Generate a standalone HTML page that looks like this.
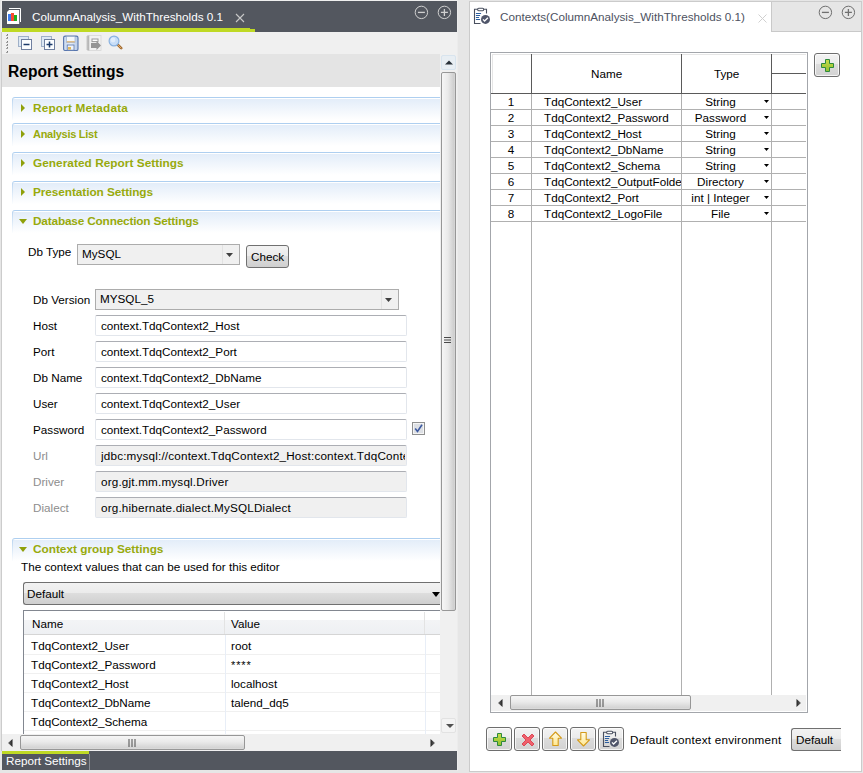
<!DOCTYPE html><html><head><meta charset="utf-8"><style>
*{margin:0;padding:0;box-sizing:border-box}
html,body{width:863px;height:773px;overflow:hidden;background:#e6e6e6;font-family:"Liberation Sans",sans-serif;font-size:11.7px;color:#000}
.a{position:absolute}
.t{position:absolute;white-space:nowrap;line-height:12px}
.sec{position:absolute;left:12px;width:428px;height:23px;border-top:1px solid #aecff0;border-left:1px solid #b8d4f0;border-top-left-radius:3px;background:linear-gradient(#ffffff 0,#ffffff 1px,#e3edf9 1px,#ffffff 100%);}
.sec:after{content:"";position:absolute;left:-1px;top:0;width:1px;height:23px;background:linear-gradient(rgba(255,255,255,0),#fff)}
.st{position:absolute;white-space:nowrap;line-height:12px;font-weight:bold;font-size:11.7px;color:#98aa0c}
.tri{position:absolute;width:0;height:0;border-top:4px solid transparent;border-bottom:4px solid transparent;border-left:4px solid #8fa00a}
.trid{position:absolute;width:0;height:0;border-left:4px solid transparent;border-right:4px solid transparent;border-top:5px solid #8fa00a}
.lbl{position:absolute;white-space:nowrap;line-height:12px}
.fld{position:absolute;left:95px;width:312px;height:21px;border:1px solid #e2e6ec;border-top-color:#acaeb4;border-radius:2px;background:#fff}
.fld.g{background:#f0f0f0}
.ft{position:absolute;left:5px;top:4px;white-space:nowrap;line-height:12px}
</style></head><body>
<div class="a" style="left:1px;top:0;width:456px;height:1px;background:#efefef"></div>
<div class="a" style="left:1px;top:0;width:1px;height:32px;background:#efefef"></div>
<div class="a" style="left:1px;top:32px;width:1px;height:719px;background:#cccccc"></div>
<div class="a" style="left:457px;top:0;width:1px;height:771px;background:#ececec"></div>
<div class="a" style="left:2px;top:1px;width:455px;height:31px;background:#53575f"></div>
<div class="a" style="left:2px;top:28px;width:248px;height:4px;background:#bfd924"></div>
<div class="a" style="left:250px;top:29px;width:5px;height:3px;background:#bfd924"></div>
<svg class="a" style="left:6px;top:7px" width="16" height="18" viewBox="0 0 16 18">
<path d="M3 1.5H14.5V15" fill="none" stroke="#fff" stroke-width="1"/>
<path d="M3 3H13.2V17H1V5Z" fill="#fff"/>
<rect x="2" y="7" width="3" height="7" fill="#3c7cf0"/>
<rect x="5" y="6" width="3" height="8" fill="#fa4a30"/>
<rect x="8" y="8" width="3" height="6" fill="#1fb020"/>
</svg>
<div class="t" style="left:32px;top:11px;color:#fff">ColumnAnalysis_WithThresholds 0.1</div>
<svg class="a" style="left:235px;top:13px" width="10" height="10" viewBox="0 0 10 10"><path d="M1 1L9 9M9 1L1 9" stroke="#c8c8c8" stroke-width="1.1"/></svg>
<svg class="a" style="left:414px;top:5px" width="15" height="15" viewBox="0 0 15 15"><circle cx="7.4" cy="7.4" r="6.2" fill="none" stroke="#d0d0d0" stroke-width="1"/><path d="M3.9 7.4H10.9" stroke="#d0d0d0" stroke-width="1.3"/></svg><svg class="a" style="left:437px;top:5px" width="15" height="15" viewBox="0 0 15 15"><circle cx="7.4" cy="7.4" r="6.2" fill="none" stroke="#d0d0d0" stroke-width="1"/><path d="M3.9 7.4H10.9M7.4 3.9V10.9" stroke="#d0d0d0" stroke-width="1.3"/></svg>
<div class="a" style="left:2px;top:32px;width:455px;height:22px;background:#f0f0f0"></div>
<div class="a" style="left:7px;top:34.0px;width:1px;height:1px;background:#808080"></div>
<div class="a" style="left:6px;top:35.0px;width:2px;height:1px;background:#a0a0a0"></div>
<div class="a" style="left:7px;top:37.3px;width:1px;height:1px;background:#808080"></div>
<div class="a" style="left:6px;top:38.3px;width:2px;height:1px;background:#a0a0a0"></div>
<div class="a" style="left:7px;top:40.6px;width:1px;height:1px;background:#808080"></div>
<div class="a" style="left:6px;top:41.6px;width:2px;height:1px;background:#a0a0a0"></div>
<div class="a" style="left:7px;top:43.9px;width:1px;height:1px;background:#808080"></div>
<div class="a" style="left:6px;top:44.9px;width:2px;height:1px;background:#a0a0a0"></div>
<div class="a" style="left:7px;top:47.2px;width:1px;height:1px;background:#808080"></div>
<div class="a" style="left:6px;top:48.2px;width:2px;height:1px;background:#a0a0a0"></div>
<div class="a" style="left:7px;top:50.5px;width:1px;height:1px;background:#808080"></div>
<div class="a" style="left:6px;top:51.5px;width:2px;height:1px;background:#a0a0a0"></div>
<svg class="a" style="left:18px;top:36px" width="14" height="14" viewBox="0 0 14 14"><rect x="0.5" y="0.5" width="10" height="10" fill="#dde8f4" stroke="#9fb0c8"/><rect x="3.5" y="3.5" width="10" height="10" fill="#fbfdff" stroke="#6f7f9f"/><path d="M5.5 8.5H11.5" stroke="#1b3a6a" stroke-width="1.5"/></svg>
<svg class="a" style="left:41px;top:36px" width="14" height="14" viewBox="0 0 14 14"><rect x="0.5" y="0.5" width="10" height="10" fill="#dde8f4" stroke="#9fb0c8"/><rect x="3.5" y="3.5" width="10" height="10" fill="#fbfdff" stroke="#6f7f9f"/><path d="M5.5 8.5H11.5" stroke="#1b3a6a" stroke-width="1.5"/><path d="M8.5 5.5V11.5" stroke="#1b3a6a" stroke-width="1.5"/></svg>
<svg class="a" style="left:63px;top:35px" width="16" height="16" viewBox="0 0 16 16">
<defs><linearGradient id="sv" x1="0" y1="0" x2="1" y2="0"><stop offset="0" stop-color="#c8d8ee"/><stop offset="0.5" stop-color="#e4ecf8"/><stop offset="1" stop-color="#b8cae6"/></linearGradient></defs>
<rect x="0.6" y="1.1" width="14.4" height="14.4" rx="1.6" fill="url(#sv)" stroke="#5876ad" stroke-width="1.1"/>
<rect x="3.5" y="1.5" width="8.5" height="6" fill="#f4f8fc" stroke="#8fa6c6" stroke-width="0.6"/>
<rect x="3.8" y="6.2" width="8" height="1.2" fill="#d9b070"/>
<rect x="4.2" y="10" width="6.8" height="5.2" fill="#f0f4fa" stroke="#5876ad" stroke-width="0.8"/>
<rect x="5" y="12" width="3" height="2.6" fill="#e0b860"/>
</svg>
<svg class="a" style="left:86px;top:35px" width="16" height="16" viewBox="0 0 16 16">
<rect x="1.5" y="0.5" width="13.5" height="15" fill="#f2f2f2" stroke="#d6d6d6" stroke-width="0.8"/>
<path d="M0.5 2H3M0.5 4H3M0.5 6H3M0.5 8H3M0.5 10H3M0.5 12H3M0.5 14H3" stroke="#9a9a9a" stroke-width="0.9"/>
<path d="M2.8 0.5V15.5" stroke="#a8a8a8" stroke-width="0.8"/>
<rect x="6" y="4" width="6" height="2.6" fill="#fff" stroke="#9a9a9a" stroke-width="1"/>
<path d="M5 8H10.5V5.8L15 10.5L10.5 15V13H5Z" fill="#959595"/>
</svg>
<svg class="a" style="left:108px;top:35px" width="15" height="15" viewBox="0 0 15 15">
<line x1="9.4" y1="9.4" x2="13.2" y2="13.2" stroke="#a06a30" stroke-width="2.6" stroke-linecap="round"/>
<line x1="9.6" y1="9.6" x2="13" y2="13" stroke="#e0a868" stroke-width="1" stroke-linecap="round"/>
<circle cx="6" cy="6" r="4.9" fill="#c8def8" stroke="#8ab2e0" stroke-width="1.2"/>
<circle cx="5" cy="5" r="2.4" fill="#ffffff" opacity="0.45"/>
</svg>
<div class="a" style="left:2px;top:54px;width:438px;height:680px;background:#fff"></div>
<div class="a" style="left:2px;top:54px;width:438px;height:33px;background:#e4e4e4"></div>
<div class="t" style="left:8px;top:64px;font-weight:bold;font-size:15.6px;line-height:16px">Report Settings</div>
<div class="sec" style="top:97px"></div>
<div class="tri" style="left:21px;top:104px"></div>
<div class="st" style="left:33px;top:102px;font-size:11.8px;letter-spacing:0.17px">Report Metadata</div>
<div class="sec" style="top:123px"></div>
<div class="tri" style="left:21px;top:130px"></div>
<div class="st" style="left:33px;top:128px;font-size:11px;letter-spacing:-0.27px">Analysis List</div>
<div class="sec" style="top:152px"></div>
<div class="tri" style="left:21px;top:159px"></div>
<div class="st" style="left:33px;top:157px;font-size:11.8px;letter-spacing:0.05px">Generated Report Settings</div>
<div class="sec" style="top:181px"></div>
<div class="tri" style="left:21px;top:188px"></div>
<div class="st" style="left:33px;top:186px;font-size:11.8px;letter-spacing:-0.06px">Presentation Settings</div>
<div class="sec" style="top:210px"></div>
<div class="trid" style="left:19px;top:219px"></div>
<div class="st" style="left:33px;top:215px;font-size:11.8px;letter-spacing:-0.17px">Database Connection Settings</div>
<div class="sec" style="top:538px"></div>
<div class="trid" style="left:19px;top:547px"></div>
<div class="st" style="left:33px;top:543px;font-size:11.8px">Context group Settings</div>
<div class="lbl" style="left:28px;top:246px">Db Type</div>
<div class="a" style="left:77px;top:244px;width:163px;height:21px;border:1px solid #acacac;background:#f0f0f0"></div>
<div class="a" style="left:222px;top:245px;width:1px;height:19px;background:#e2e2e2"></div>
<div class="t" style="left:82px;top:248px">MySQL</div>
<svg class="a" style="left:226px;top:253px" width="8" height="4" viewBox="0 0 8 4"><path d="M0 0H7L3.5 4Z" fill="#404040"/></svg>
<div class="a" style="left:246px;top:245px;width:43px;height:23px;border:1px solid #707070;border-radius:3px;background:linear-gradient(#f2f2f2 0%,#ebebeb 50%,#dddddd 50%,#cfcfcf 100%)"></div>
<div class="t" style="left:251px;top:251px">Check</div>
<div class="lbl" style="left:33px;top:294px">Db Version</div>
<div class="a" style="left:95px;top:289px;width:304px;height:21px;border:1px solid #acacac;background:#f0f0f0"></div>
<div class="a" style="left:381px;top:290px;width:1px;height:19px;background:#e2e2e2"></div>
<div class="t" style="left:100px;top:293px">MYSQL_5</div>
<svg class="a" style="left:385px;top:298px" width="8" height="4" viewBox="0 0 8 4"><path d="M0 0H7L3.5 4Z" fill="#404040"/></svg>
<div class="lbl" style="left:33px;top:320px;color:#000">Host</div>
<div class="fld" style="top:315px;overflow:hidden"><div class="ft" style="">context.TdqContext2_Host</div></div>
<div class="lbl" style="left:33px;top:346px;color:#000">Port</div>
<div class="fld" style="top:341px;overflow:hidden"><div class="ft" style="">context.TdqContext2_Port</div></div>
<div class="lbl" style="left:33px;top:372px;color:#000">Db Name</div>
<div class="fld" style="top:367px;overflow:hidden"><div class="ft" style="">context.TdqContext2_DbName</div></div>
<div class="lbl" style="left:33px;top:398px;color:#000">User</div>
<div class="fld" style="top:393px;overflow:hidden"><div class="ft" style="">context.TdqContext2_User</div></div>
<div class="lbl" style="left:33px;top:424px;color:#000">Password</div>
<div class="fld" style="top:419px;overflow:hidden"><div class="ft" style="">context.TdqContext2_Password</div></div>
<div class="lbl" style="left:33px;top:450px;color:#8d8d8d">Url</div>
<div class="fld g" style="top:445px;overflow:hidden"><div class="ft" style="letter-spacing:0.18px;width:304px;overflow:hidden">jdbc:mysql://context.TdqContext2_Host:context.TdqContext2_Port</div></div>
<div class="lbl" style="left:33px;top:476px;color:#8d8d8d">Driver</div>
<div class="fld g" style="top:471px;overflow:hidden"><div class="ft" style="letter-spacing:0.18px;width:304px;overflow:hidden">org.gjt.mm.mysql.Driver</div></div>
<div class="lbl" style="left:33px;top:502px;color:#8d8d8d">Dialect</div>
<div class="fld g" style="top:497px;overflow:hidden"><div class="ft" style="letter-spacing:0.18px;width:304px;overflow:hidden">org.hibernate.dialect.MySQLDialect</div></div>
<svg class="a" style="left:412px;top:422px" width="13" height="13" viewBox="0 0 13 13">
<rect x="0.5" y="0.5" width="12" height="12" fill="#f4f4f4" stroke="#8e8f8f"/>
<rect x="2" y="2" width="9" height="9" fill="#dcdfe4"/>
<path d="M3.2 6.5L5.5 9.5L10 2.8" fill="none" stroke="#3d5aa0" stroke-width="1.6"/>
</svg>
<div class="t" style="left:21px;top:561px">The context values that can be used for this editor</div>
<div class="a" style="left:23px;top:582px;width:418px;height:23px;border:1px solid #707070;border-right:none;border-radius:3px 0 0 3px;background:linear-gradient(#f2f2f2 0%,#ebebeb 50%,#dddddd 50%,#cfcfcf 100%)"></div>
<div class="t" style="left:27px;top:588px">Default</div>
<svg class="a" style="left:432px;top:592px" width="8" height="5" viewBox="0 0 8 5"><path d="M0 0H8L4 5Z" fill="#000"/></svg>
<div class="a" style="left:23px;top:610px;width:418px;height:124px;border-top:1px solid #828790;border-left:1px solid #828790;background:#fff;overflow:hidden">
<div class="a" style="left:0;top:9px;width:417px;height:14px;background:linear-gradient(#f3f4f6,#eef0f3)"></div>
<div class="a" style="left:0;top:23px;width:417px;height:1px;background:#d5d5d5"></div>
<div class="a" style="left:200px;top:1px;width:1px;height:22px;background:#e3e3e3"></div>
<div class="a" style="left:400px;top:1px;width:1px;height:22px;background:#e3e3e3"></div>
<div class="t" style="left:8px;top:7px">Name</div>
<div class="t" style="left:207px;top:7px">Value</div>
<div class="a" style="left:0;top:43px;width:417px;height:1px;background:#f0f0f0"></div>
<div class="t" style="left:7px;top:29px">TdqContext2_User</div>
<div class="t" style="left:207px;top:29px">root</div>
<div class="a" style="left:0;top:62px;width:417px;height:1px;background:#f0f0f0"></div>
<div class="t" style="left:7px;top:48px">TdqContext2_Password</div>
<div class="t" style="left:207px;top:48px;font-size:11px;letter-spacing:0.9px">****</div>
<div class="a" style="left:0;top:81px;width:417px;height:1px;background:#f0f0f0"></div>
<div class="t" style="left:7px;top:67px">TdqContext2_Host</div>
<div class="t" style="left:207px;top:67px">localhost</div>
<div class="a" style="left:0;top:100px;width:417px;height:1px;background:#f0f0f0"></div>
<div class="t" style="left:7px;top:86px">TdqContext2_DbName</div>
<div class="t" style="left:207px;top:86px">talend_dq5</div>
<div class="a" style="left:0;top:119px;width:417px;height:1px;background:#f0f0f0"></div>
<div class="t" style="left:7px;top:105px">TdqContext2_Schema</div>
<div class="t" style="left:207px;top:105px"></div>
<div class="a" style="left:201px;top:24px;width:1px;height:100px;background:#e8eef7"></div>
<div class="a" style="left:401px;top:24px;width:1px;height:100px;background:#e8eef7"></div>
</div>
<div class="a" style="left:440px;top:54px;width:17px;height:680px;background:#f0f0f0"></div>
<div class="a" style="left:441px;top:55px;width:15px;height:15px;border:1px solid #d8e4ee;border-radius:2px;background:#e8eef3"></div>
<svg class="a" style="left:445px;top:60px" width="8" height="5" viewBox="0 0 8 5"><path d="M0 4.5L4 0.5L8 4.5Z" fill="#283038"/></svg>
<div class="a" style="left:441px;top:72px;width:15px;height:539px;border:1px solid #979797;border-radius:2px;background:linear-gradient(90deg,#f6f6f6,#eaeaea 45%,#cfcfcf 90%,#d8d8d8)"></div>
<svg class="a" style="left:444px;top:337px" width="8" height="7" viewBox="0 0 8 7"><path d="M0 0.5H7M0 3H7M0 5.5H7" stroke="#4a4a4a" stroke-width="1"/></svg>
<div class="a" style="left:441px;top:718px;width:15px;height:15px;border:1px solid #e2e2e2;border-radius:2px;background:#f3f3f3"></div>
<svg class="a" style="left:446px;top:724px" width="8" height="4" viewBox="0 0 8 4"><path d="M0 0H8L4 4Z" fill="#505050"/></svg>
<div class="a" style="left:2px;top:734px;width:455px;height:17px;background:#f0f0f0"></div>
<svg class="a" style="left:8px;top:739px" width="5" height="8" viewBox="0 0 5 8"><defs><linearGradient id="ha" x1="0" y1="0" x2="1" y2="0"><stop offset="0" stop-color="#707070"/><stop offset="1" stop-color="#202020"/></linearGradient><linearGradient id="hb" x1="0" y1="0" x2="1" y2="0"><stop offset="0" stop-color="#202020"/><stop offset="1" stop-color="#707070"/></linearGradient></defs><path d="M4.5 0L0 4L4.5 8Z" fill="url(#ha)"/></svg>
<div class="a" style="left:20px;top:735px;width:225px;height:15px;border:1px solid #979797;border-radius:2px;background:linear-gradient(#f6f6f6,#eaeaea 45%,#d4d4d4 90%,#dcdcdc)"></div>
<svg class="a" style="left:128px;top:739px" width="8" height="8" viewBox="0 0 8 8"><path d="M1 0V8M4 0V8M7 0V8" stroke="#4a4a4a" stroke-width="1"/></svg>
<svg class="a" style="left:430px;top:739px" width="5" height="8" viewBox="0 0 5 8"><path d="M0.5 0L5 4L0.5 8Z" fill="url(#hb)"/></svg>
<div class="a" style="left:2px;top:751px;width:455px;height:19px;background:#53575f"></div>
<div class="a" style="left:2px;top:751px;width:87px;height:3px;background:#bfd924"></div>
<div class="a" style="left:89px;top:754px;width:1px;height:16px;background:#8a8d94"></div>
<div class="t" style="left:6px;top:755px;color:#fff">Report Settings</div>
<div class="a" style="left:469px;top:1px;width:393px;height:771px;background:#cbcbcb"></div>
<div class="a" style="left:470px;top:2px;width:391px;height:769px;background:#fff"></div>
<div class="a" style="left:771px;top:2px;width:90px;height:30px;background:#e6e6e6;border-left:1px solid #c9c9c9;border-bottom:1px solid #c9c9c9"></div>
<div class="t" style="left:500px;top:11px;color:#4d5261">Contexts(ColumnAnalysis_WithThresholds 0.1)</div>
<svg class="a" style="left:472px;top:5px" width="20" height="20" viewBox="0 0 20 20">
<path d="M8.5 18.5H2.5V4.3H14.5V8.5" fill="none" stroke="#4a5060" stroke-width="1.1"/>
<rect x="5.6" y="3.3" width="6.1" height="2.4" rx="1.1" fill="#fff" stroke="#4a5060" stroke-width="1.1"/>
<path d="M4.3 8.5H8.7M4.3 10.5H7.7M4.3 12.5H6.7M4.3 14.5H7.7" stroke="#2a5d9f" stroke-width="1" stroke-linecap="round"/>
<circle cx="13.5" cy="14.4" r="4.5" fill="#50566a"/>
<path d="M11 14.4L12.6 16L15.9 12.8" fill="none" stroke="#fff" stroke-width="1.3"/>
</svg>
<svg class="a" style="left:758px;top:14px" width="9" height="9" viewBox="0 0 9 9"><path d="M0.5 0.5L8.5 8.5M8.5 0.5L0.5 8.5" stroke="#d0d0d0" stroke-width="1"/></svg>
<svg class="a" style="left:818px;top:5px" width="15" height="15" viewBox="0 0 15 15"><circle cx="7.4" cy="7.4" r="6.2" fill="none" stroke="#707070" stroke-width="1"/><path d="M3.9 7.4H10.9" stroke="#707070" stroke-width="1.3"/></svg><svg class="a" style="left:841px;top:5px" width="15" height="15" viewBox="0 0 15 15"><circle cx="7.4" cy="7.4" r="6.2" fill="none" stroke="#707070" stroke-width="1"/><path d="M3.9 7.4H10.9M7.4 3.9V10.9" stroke="#707070" stroke-width="1.3"/></svg>
<div class="a" style="left:490px;top:52px;width:318px;height:661px;border:1px solid #a3a6ab;background:#fff"></div>
<div class="a" style="left:492px;top:54px;width:314px;height:1px;background:#e6e6e6"></div>
<div class="a" style="left:492px;top:54px;width:1px;height:40px;background:#e6e6e6"></div>
<div class="a" style="left:491px;top:93px;width:315px;height:1px;background:#5a5a5a"></div>
<div class="a" style="left:531px;top:54px;width:1px;height:40px;background:#5a5a5a"></div>
<div class="a" style="left:681px;top:54px;width:1px;height:40px;background:#5a5a5a"></div>
<div class="a" style="left:771px;top:54px;width:1px;height:40px;background:#5a5a5a"></div>
<div class="a" style="left:772px;top:73px;width:34px;height:1px;background:#5a5a5a"></div>
<div class="t" style="left:591px;top:68px">Name</div>
<div class="t" style="left:714px;top:68px">Type</div>
<div class="a" style="left:531px;top:94px;width:1px;height:601px;background:#b0b0b0"></div>
<div class="a" style="left:681px;top:94px;width:1px;height:601px;background:#b0b0b0"></div>
<div class="a" style="left:771px;top:94px;width:1px;height:601px;background:#b0b0b0"></div>
<div class="a" style="left:491px;top:109px;width:315px;height:1px;background:#b0b0b0"></div>
<div class="t" style="left:491px;top:96px;width:40px;text-align:center">1</div>
<div class="a" style="left:532px;top:94px;width:149px;height:15px;overflow:hidden"><div class="t" style="left:12px;top:2px">TdqContext2_User</div></div>
<div class="t" style="left:682px;top:96px;width:77px;text-align:center">String</div>
<svg class="a" style="left:764px;top:100px" width="5" height="3" viewBox="0 0 5 3"><path d="M0 0H5L2.5 3Z" fill="#000"/></svg>
<div class="a" style="left:491px;top:125px;width:315px;height:1px;background:#b0b0b0"></div>
<div class="t" style="left:491px;top:112px;width:40px;text-align:center">2</div>
<div class="a" style="left:532px;top:110px;width:149px;height:15px;overflow:hidden"><div class="t" style="left:12px;top:2px">TdqContext2_Password</div></div>
<div class="t" style="left:682px;top:112px;width:77px;text-align:center">Password</div>
<svg class="a" style="left:764px;top:116px" width="5" height="3" viewBox="0 0 5 3"><path d="M0 0H5L2.5 3Z" fill="#000"/></svg>
<div class="a" style="left:491px;top:141px;width:315px;height:1px;background:#b0b0b0"></div>
<div class="t" style="left:491px;top:128px;width:40px;text-align:center">3</div>
<div class="a" style="left:532px;top:126px;width:149px;height:15px;overflow:hidden"><div class="t" style="left:12px;top:2px">TdqContext2_Host</div></div>
<div class="t" style="left:682px;top:128px;width:77px;text-align:center">String</div>
<svg class="a" style="left:764px;top:132px" width="5" height="3" viewBox="0 0 5 3"><path d="M0 0H5L2.5 3Z" fill="#000"/></svg>
<div class="a" style="left:491px;top:157px;width:315px;height:1px;background:#b0b0b0"></div>
<div class="t" style="left:491px;top:144px;width:40px;text-align:center">4</div>
<div class="a" style="left:532px;top:142px;width:149px;height:15px;overflow:hidden"><div class="t" style="left:12px;top:2px">TdqContext2_DbName</div></div>
<div class="t" style="left:682px;top:144px;width:77px;text-align:center">String</div>
<svg class="a" style="left:764px;top:148px" width="5" height="3" viewBox="0 0 5 3"><path d="M0 0H5L2.5 3Z" fill="#000"/></svg>
<div class="a" style="left:491px;top:173px;width:315px;height:1px;background:#b0b0b0"></div>
<div class="t" style="left:491px;top:160px;width:40px;text-align:center">5</div>
<div class="a" style="left:532px;top:158px;width:149px;height:15px;overflow:hidden"><div class="t" style="left:12px;top:2px">TdqContext2_Schema</div></div>
<div class="t" style="left:682px;top:160px;width:77px;text-align:center">String</div>
<svg class="a" style="left:764px;top:164px" width="5" height="3" viewBox="0 0 5 3"><path d="M0 0H5L2.5 3Z" fill="#000"/></svg>
<div class="a" style="left:491px;top:189px;width:315px;height:1px;background:#b0b0b0"></div>
<div class="t" style="left:491px;top:176px;width:40px;text-align:center">6</div>
<div class="a" style="left:532px;top:174px;width:149px;height:15px;overflow:hidden"><div class="t" style="left:12px;top:2px">TdqContext2_OutputFolder</div></div>
<div class="t" style="left:682px;top:176px;width:77px;text-align:center">Directory</div>
<svg class="a" style="left:764px;top:180px" width="5" height="3" viewBox="0 0 5 3"><path d="M0 0H5L2.5 3Z" fill="#000"/></svg>
<div class="a" style="left:491px;top:205px;width:315px;height:1px;background:#b0b0b0"></div>
<div class="t" style="left:491px;top:192px;width:40px;text-align:center">7</div>
<div class="a" style="left:532px;top:190px;width:149px;height:15px;overflow:hidden"><div class="t" style="left:12px;top:2px">TdqContext2_Port</div></div>
<div class="t" style="left:682px;top:192px;width:77px;text-align:center">int | Integer</div>
<svg class="a" style="left:764px;top:196px" width="5" height="3" viewBox="0 0 5 3"><path d="M0 0H5L2.5 3Z" fill="#000"/></svg>
<div class="a" style="left:491px;top:221px;width:315px;height:1px;background:#b0b0b0"></div>
<div class="t" style="left:491px;top:208px;width:40px;text-align:center">8</div>
<div class="a" style="left:532px;top:206px;width:149px;height:15px;overflow:hidden"><div class="t" style="left:12px;top:2px">TdqContext2_LogoFile</div></div>
<div class="t" style="left:682px;top:208px;width:77px;text-align:center">File</div>
<svg class="a" style="left:764px;top:212px" width="5" height="3" viewBox="0 0 5 3"><path d="M0 0H5L2.5 3Z" fill="#000"/></svg>
<div class="a" style="left:491px;top:695px;width:315px;height:16px;background:#f0f0f0"></div>
<svg class="a" style="left:498px;top:699px" width="5" height="8" viewBox="0 0 5 8"><path d="M4.5 0L0 4L4.5 8Z" fill="url(#ha)"/></svg>
<div class="a" style="left:510px;top:695px;width:181px;height:15px;border:1px solid #979797;border-radius:2px;background:linear-gradient(#f6f6f6,#eaeaea 45%,#d4d4d4 90%,#dcdcdc)"></div>
<svg class="a" style="left:596px;top:699px" width="8" height="8" viewBox="0 0 8 8"><path d="M1 0V8M4 0V8M7 0V8" stroke="#4a4a4a" stroke-width="1"/></svg>
<svg class="a" style="left:796px;top:699px" width="5" height="8" viewBox="0 0 5 8"><path d="M0.5 0L5 4L0.5 8Z" fill="url(#hb)"/></svg>
<div class="a" style="left:814px;top:53px;width:26px;height:24px;border:1px solid #6e6e6e;border-radius:3px;background:linear-gradient(#f3f3f3 0%,#ebebeb 45%,#dcdcdc 45%,#d2d2d2 100%);box-shadow:inset 0 0 0 1px rgba(255,255,255,0.75)"><svg class="a" style="left:6px;top:5px" width="13" height="13" viewBox="0 0 13 13"><defs><linearGradient id="gp" x1="0" y1="0" x2="0" y2="1"><stop offset="0" stop-color="#c8dc48"/><stop offset="1" stop-color="#90c030"/></linearGradient><linearGradient id="ga" x1="0" y1="0" x2="0" y2="1"><stop offset="0" stop-color="#fffbe6"/><stop offset="1" stop-color="#ffe890"/></linearGradient></defs><path d="M4.5 0.5H8.5V4.5H12.5V8.5H8.5V12.5H4.5V8.5H0.5V4.5H4.5Z" fill="url(#gp)" stroke="#2c8a3c" stroke-width="1"/></svg></div>
<div class="a" style="left:486px;top:727px;width:26px;height:24px;border:1px solid #6e6e6e;border-radius:3px;background:linear-gradient(#f3f3f3 0%,#ebebeb 45%,#dcdcdc 45%,#d2d2d2 100%);box-shadow:inset 0 0 0 1px rgba(255,255,255,0.75)"><svg class="a" style="left:6px;top:5px" width="13" height="13" viewBox="0 0 13 13"><defs><linearGradient id="gp" x1="0" y1="0" x2="0" y2="1"><stop offset="0" stop-color="#c8dc48"/><stop offset="1" stop-color="#90c030"/></linearGradient><linearGradient id="ga" x1="0" y1="0" x2="0" y2="1"><stop offset="0" stop-color="#fffbe6"/><stop offset="1" stop-color="#ffe890"/></linearGradient></defs><path d="M4.5 0.5H8.5V4.5H12.5V8.5H8.5V12.5H4.5V8.5H0.5V4.5H4.5Z" fill="url(#gp)" stroke="#2c8a3c" stroke-width="1"/></svg></div>
<div class="a" style="left:514px;top:727px;width:26px;height:24px;border:1px solid #6e6e6e;border-radius:3px;background:linear-gradient(#f3f3f3 0%,#ebebeb 45%,#dcdcdc 45%,#d2d2d2 100%);box-shadow:inset 0 0 0 1px rgba(255,255,255,0.75)"><svg class="a" style="left:6px;top:5px" width="14" height="14" viewBox="0 0 14 14"><path d="M3 1L7 5L11 1L13 3L9 7L13 11L11 13L7 9L3 13L1 11L5 7L1 3Z" fill="#f0606c" stroke="#d8404e" stroke-width="0.9" stroke-linejoin="round"/></svg></div>
<div class="a" style="left:542px;top:727px;width:26px;height:24px;border:1px solid #6e6e6e;border-radius:3px;background:linear-gradient(#f3f3f3 0%,#ebebeb 45%,#dcdcdc 45%,#d2d2d2 100%);box-shadow:inset 0 0 0 1px rgba(255,255,255,0.75)"><svg class="a" style="left:5px;top:3px" width="15" height="16" viewBox="0 0 15 16"><defs><linearGradient id="gp" x1="0" y1="0" x2="0" y2="1"><stop offset="0" stop-color="#c8dc48"/><stop offset="1" stop-color="#90c030"/></linearGradient><linearGradient id="ga" x1="0" y1="0" x2="0" y2="1"><stop offset="0" stop-color="#fffbe6"/><stop offset="1" stop-color="#ffe890"/></linearGradient></defs><path d="M7.5 1L13.5 7.2H10.2V14.5H4.8V7.2H1.5Z" fill="url(#ga)" stroke="#d49a1a" stroke-width="1.1" stroke-linejoin="round"/></svg></div>
<div class="a" style="left:570px;top:727px;width:26px;height:24px;border:1px solid #6e6e6e;border-radius:3px;background:linear-gradient(#f3f3f3 0%,#ebebeb 45%,#dcdcdc 45%,#d2d2d2 100%);box-shadow:inset 0 0 0 1px rgba(255,255,255,0.75)"><svg class="a" style="left:5px;top:3px" width="15" height="16" viewBox="0 0 15 16"><defs><linearGradient id="gp" x1="0" y1="0" x2="0" y2="1"><stop offset="0" stop-color="#c8dc48"/><stop offset="1" stop-color="#90c030"/></linearGradient><linearGradient id="ga" x1="0" y1="0" x2="0" y2="1"><stop offset="0" stop-color="#fffbe6"/><stop offset="1" stop-color="#ffe890"/></linearGradient></defs><path d="M7.5 15L13.5 8.8H10.2V1.5H4.8V8.8H1.5Z" fill="url(#ga)" stroke="#d49a1a" stroke-width="1.1" stroke-linejoin="round"/></svg></div>
<div class="a" style="left:598px;top:727px;width:26px;height:24px;border:1px solid #6e6e6e;border-radius:3px;background:linear-gradient(#f3f3f3 0%,#ebebeb 45%,#dcdcdc 45%,#d2d2d2 100%);box-shadow:inset 0 0 0 1px rgba(255,255,255,0.75)"></div>
<svg class="a" style="left:601px;top:728px" width="20" height="20" viewBox="0 0 20 20">
<path d="M8.5 18.5H2.5V4.3H14.5V8.5" fill="none" stroke="#4a5060" stroke-width="1.1"/>
<rect x="5.6" y="3.3" width="6.1" height="2.4" rx="1.1" fill="#fff" stroke="#4a5060" stroke-width="1.1"/>
<path d="M4.3 8.5H8.7M4.3 10.5H7.7M4.3 12.5H6.7M4.3 14.5H7.7" stroke="#2a5d9f" stroke-width="1" stroke-linecap="round"/>
<circle cx="13.5" cy="14.4" r="4.5" fill="#50566a"/>
<path d="M11 14.4L12.6 16L15.9 12.8" fill="none" stroke="#fff" stroke-width="1.3"/>
</svg>
<div class="t" style="left:630px;top:734px;letter-spacing:0.22px">Default context environment</div>
<div class="a" style="left:791px;top:728px;width:50px;height:23px;border:1px solid #707070;border-right:none;border-radius:3px 0 0 3px;background:linear-gradient(#f2f2f2 0%,#ebebeb 50%,#dddddd 50%,#cfcfcf 100%)"></div>
<div class="t" style="left:796px;top:734px">Default</div>
</body></html>
